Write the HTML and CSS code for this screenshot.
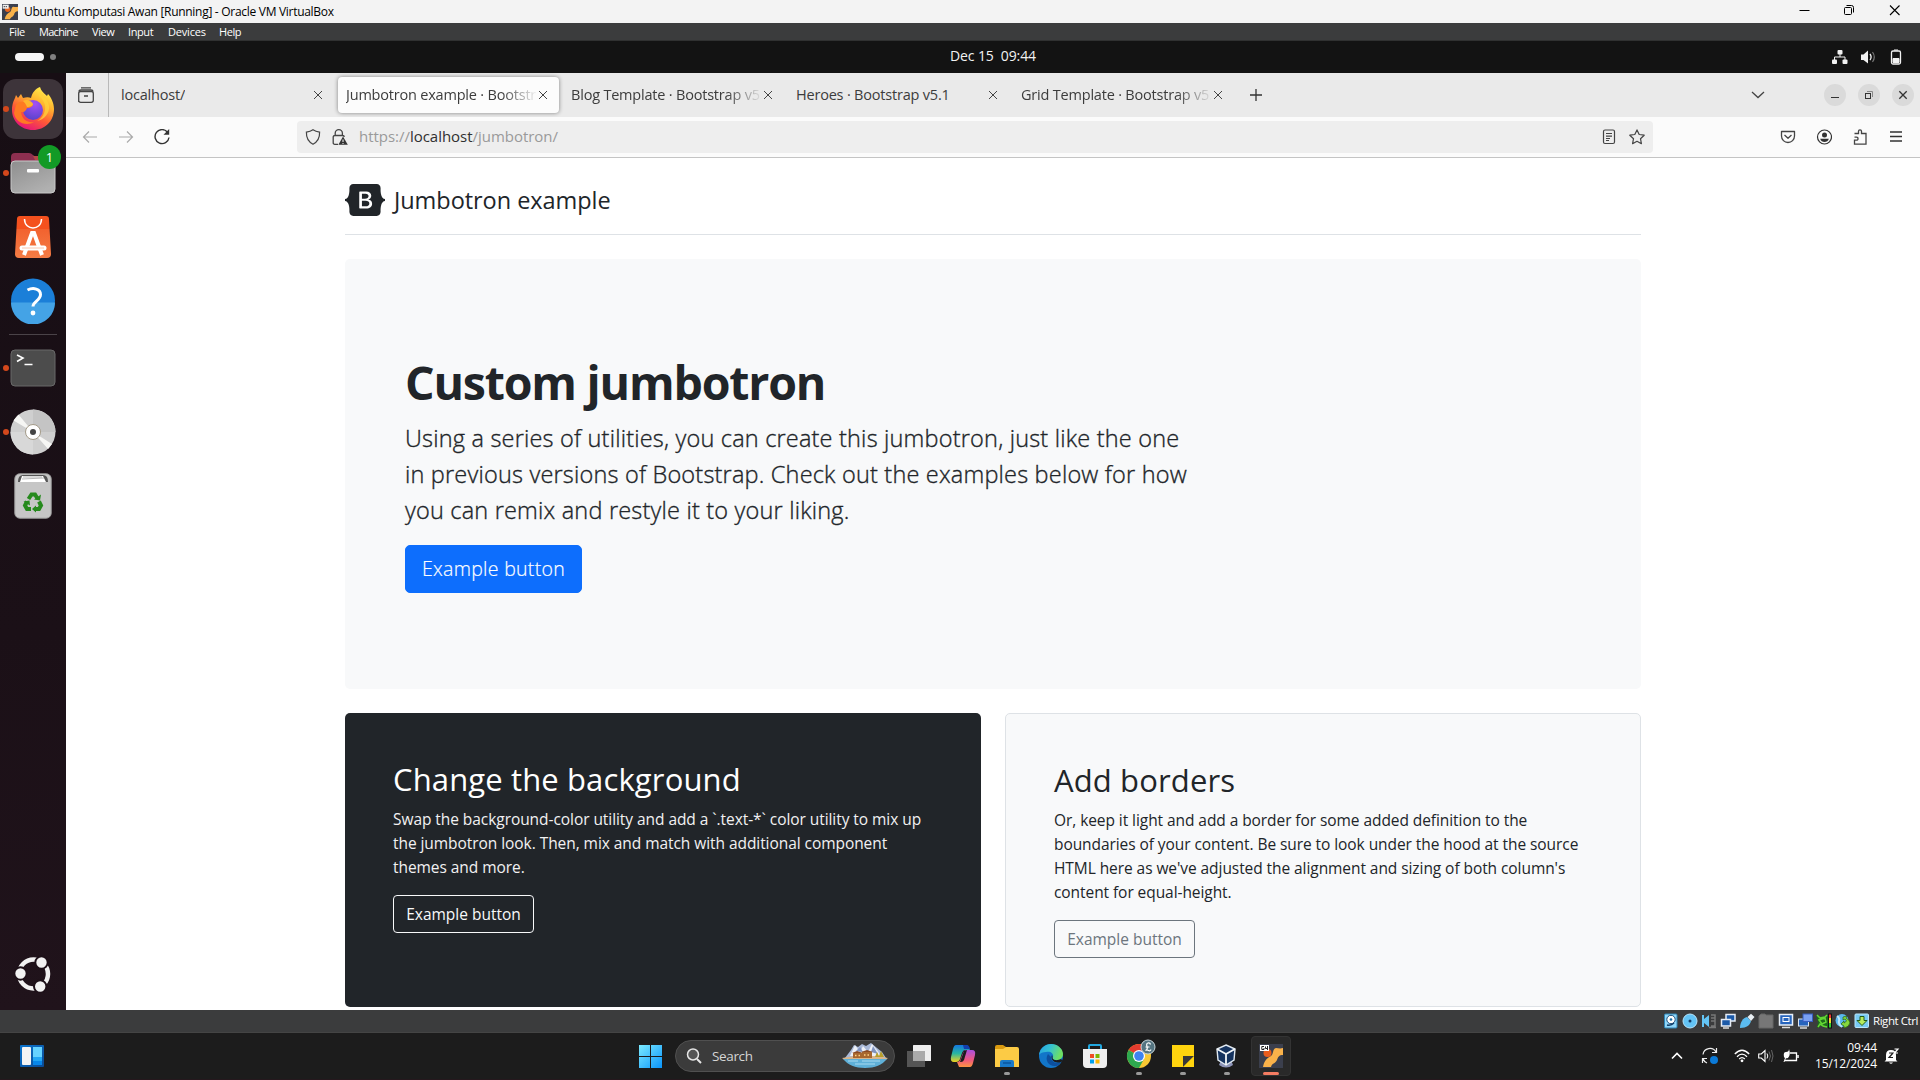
FILE: index.html
```
<!DOCTYPE html>
<html lang="en">
<head>
<meta charset="utf-8">
<title>Ubuntu Komputasi Awan [Running] - Oracle VM VirtualBox</title>
<link rel="stylesheet" href="styles.css">
</head>
<body>
<div class="screen">

  <header class="titlebar">
    <svg class="app-icon" width="16" height="16" viewBox="0 0 24 24"><rect width="24" height="24" fill="#3b3f4d"/><path d="M4 23c1-6 4-9 8-11 3-2 1-7 5-8 2 0 4 1 7 0v7c-4 0-5 2-6 5-2 4-5 3-6 7z" fill="#f9b24a"/><circle cx="8.500" cy="8" r="4" fill="#e8641f"/><rect x="1" y="1" width="9" height="6" fill="#eee"/><path d="M2.500 4h6" stroke="#444" stroke-width="1.500" stroke-dasharray="2 1"/></svg>
    <span class="titlebar-text">Ubuntu Komputasi Awan [Running] - Oracle VM VirtualBox</span>
    <div class="titlebar-controls">
      <svg width="45" height="23" viewBox="0 0 45 23"><path d="M17.500 10.500h10" stroke="#000"/></svg>
      <svg width="45" height="23" viewBox="0 0 45 23"><g fill="none" stroke="#000"><rect x="17.500" y="7.500" width="7" height="7" rx="1"/><path d="M19.500 5.500h5q2 0 2 2v5"/></g></svg>
      <svg width="45" height="23" viewBox="0 0 45 23"><path d="M18 5.500l9.500 9.500M27.500 5.500L18 15" stroke="#000" stroke-width="1.100"/></svg>
    </div>
  </header>

  <nav class="menubar">
    <span class="menu-file">File</span><span class="menu-machine">Machine</span><span class="menu-view">View</span><span class="menu-input">Input</span><span class="menu-devices">Devices</span><span>Help</span>
  </nav>

  <div class="topbar">
    <div class="workspaces"><i class="workspace-active"></i><i class="workspace-dot"></i></div>
    <div class="topbar-clock">Dec 15&nbsp; 09:44</div>
    <div class="topbar-status">
      <svg width="16" height="16" viewBox="0 0 16 16"><g fill="#f2f2f2"><rect x="5.500" y="1" width="5" height="4.500" rx="1"/><rect x="0" y="10.500" width="5" height="4.500" rx="1"/><rect x="10.500" y="10.500" width="5" height="4.500" rx="1"/></g><path d="M8 5v3M2.500 11V8h10.500v3" fill="none" stroke="#f2f2f2"/></svg>
      <svg width="16" height="16" viewBox="0 0 16 16"><path d="M1 5.500h2.500L8 1.500v13L3.500 11H1z" fill="#f2f2f2"/><path d="M10 5q2.200 3 0 6" fill="none" stroke="#f2f2f2" stroke-width="1.300"/><path d="M12.500 3q3.600 5 0 10" fill="none" stroke="#777" stroke-width="1.200"/></svg>
      <svg width="16" height="16" viewBox="0 0 16 16"><rect x="3.500" y="2" width="9" height="13" rx="1.500" fill="none" stroke="#f2f2f2" stroke-width="1.300"/><path d="M6 1h4M5 9.500h6v4H5z" fill="#f2f2f2" stroke="#f2f2f2"/></svg>
    </div>
  </div>

  <div class="desktop">
    <aside class="dock">
      <div class="dock-item running"><div class="dock-focus">
        <svg width="44" height="44" viewBox="0 0 44 44">
          <defs><linearGradient id="fx" x1=".8" y1="0" x2=".3" y2="1"><stop offset="0" stop-color="#fff44f"/><stop offset=".35" stop-color="#ffb32e"/><stop offset=".65" stop-color="#ff5a36"/><stop offset="1" stop-color="#e5127b"/></linearGradient><radialGradient id="fp" cx=".6" cy=".2" r=".9"><stop offset="0" stop-color="#a450f5"/><stop offset="1" stop-color="#5141c8"/></radialGradient></defs>
          <path d="M29 0c1 4 4 6 7 9l1-2c3 3 6 9 6 15 0 12-9 21-21 21S1 34 1 23c0-6 2-10 3-12l1-3 2 3 3-4 2 4c3-1 6-1 8 0 1-5 4-9 9-11z" fill="url(#fx)"/>
          <circle cx="22" cy="23" r="10" fill="url(#fp)"/>
          <path d="M5 18c2-3 5-4 9-3l8 2c0 2-2 4-6 4-2 5-5 4-6 4 1 8 7 11 13 10-8 5-19 0-20-9z" fill="#ff7a22"/>
          <path d="M12 14c4-3 10 1 10 3s-3 3-6 3c-1-3-3-5-4-6z" fill="#ffb52e"/>
          <path d="M28 9c4 3 7 8 6 14-1 5-4 9-8 11 7-1 13-8 12-15-1-6-5-9-10-14z" fill="#ffd33b" opacity=".75"/>
        </svg></div></div>
      <div class="dock-item running"><svg width="46" height="42" viewBox="0 0 46 42"><defs><linearGradient id="fl" x1="0" y1="0" x2=".6" y2="1"><stop offset="0" stop-color="#8e8e8e"/><stop offset="1" stop-color="#b0b0b0"/></linearGradient></defs><path d="M1 5q0-4 4-4h14q2 0 4 2t4 2h14q4 0 4 4v10H1z" fill="#8d2f50"/><path d="M23 4h18q4 0 4 4H25z" fill="#b24a45"/><rect x="1" y="9" width="44" height="32" rx="4" fill="url(#fl)" stroke="#c9c9c9"/><rect x="17" y="17" width="12" height="3.500" rx="1" fill="#fff"/></svg><b class="dock-badge">1</b></div>
      <div class="dock-item"><svg width="38" height="42" viewBox="0 0 38 42"><defs><linearGradient id="ap" x1="0" y1="0" x2="0" y2="1"><stop offset="0" stop-color="#f4511e"/><stop offset=".3" stop-color="#f4511e"/><stop offset=".31" stop-color="#f2622f"/><stop offset="1" stop-color="#f47c45"/></linearGradient></defs><path d="M6 0h26q3 0 3 3l2 35q0 4-4 4H5q-4 0-4-4L3 3q0-3 3-3z" fill="url(#ap)"/><path d="M10.500 3c0 12 17 12 17 0" fill="none" stroke="#fff" stroke-width="1.500"/><path d="M10 39l8-22h2l8 22" fill="none" stroke="#fff" stroke-width="4"/><path d="M8 32h22" stroke="#fff" stroke-width="5" stroke-linecap="round"/><path d="M8 32h22" stroke="#f9c6b0" stroke-width="1"/></svg></div>
      <div class="dock-item"><svg width="46" height="46" viewBox="0 0 46 46"><circle cx="23" cy="22.500" r="22" fill="#1b7fd8"/><path d="M1 24.500h44a22 22 0 0 1-44 0z" fill="#44a3e6"/><path d="M17.500 12c6-3 13-1 13 4.500 0 6-7.500 7-7.500 12" fill="none" stroke="#fff" stroke-width="3"/><circle cx="23" cy="35" r="2.400" fill="#fff"/></svg></div>
      <hr class="dock-divider">
      <div class="dock-item running"><svg width="46" height="38" viewBox="0 0 46 38"><rect x="1" y="1" width="44" height="36" rx="4" fill="#4c4c4c" stroke="#686868"/><path d="M7 6l6 3-6 3.500M14.500 15.500h8" fill="none" stroke="#fff" stroke-width="1.600"/></svg></div>
      <div class="dock-item running"><svg width="46" height="46" viewBox="0 0 46 46"><circle cx="23" cy="23" r="22.500" fill="#cfcfcf"/><path d="M23 23V.5A22.500 22.500 0 0 1 45.500 23z" fill="#c4c4c4"/><path d="M23 23v22.500A22.500 22.500 0 0 1 .5 23z" fill="#d8d8d8"/><path d="M23 23L3.500 11.500l5-6zM23 23l19 12-4 5z" fill="#f6f6f4"/><circle cx="23" cy="23" r="7.500" fill="#fff" stroke="#a39a88"/><circle cx="23" cy="23" r="3" fill="#444"/></svg></div>
      <div class="dock-item"><svg width="38" height="46" viewBox="0 0 38 46"><rect x=".8" y=".8" width="36.400" height="44.400" rx="5" fill="#c6c6c6" stroke="#9d9d9d"/><path d="M4 9q0-7 5-7h20q5 0 5 7z" fill="#555"/><path d="M6 9l2-6h21l3 6z" fill="#fff"/><path d="M8 6l22-1M9 4h19" stroke="#999" stroke-width=".7"/><g fill="none" stroke="#268a1d" stroke-width="4"><path d="M14.500 26l3-4.500h3.500l2.500 4"/><path d="M25 28.500l2 4-2 3.500h-4.500"/><path d="M17 36h-4l-2-3.500 2-4"/></g><path d="M20 26.500l6 1 1-6zM22 32.500v7L18 36zM9.500 28.500l6-1 .5 5z" fill="#268a1d"/></svg></div>
      <div class="dock-apps"><svg width="38" height="38" viewBox="0 0 38 38"><circle cx="19.500" cy="19" r="14.500" fill="none" stroke="#f2f2f2" stroke-width="4.500"/><g fill="#f2f2f2" stroke="#1d1018" stroke-width="2"><circle cx="6.500" cy="18.500" r="6.200"/><circle cx="27.500" cy="7.500" r="6.200"/><circle cx="26.200" cy="31.500" r="6.200"/></g></svg></div>
    </aside>

    <section class="browser">
      <div class="tabstrip">
        <div class="tab-history"><svg width="16" height="16" viewBox="0 0 16 16"><g fill="none" stroke="#444" stroke-width="1.300"><path d="M3 .8h10M.7 15V6.500q0-2 2-2h10.600q2 0 2 2v7q0 1.800-2 1.800H2.700q-2 0-2-1.800"/><path d="M1 4.500Q1 3 3 3h10q2 0 2 1.500M6 9h4"/></g></svg></div>
        <div class="tab"><span class="tab-title">localhost/</span><svg class="tab-close" width="10" height="10" viewBox="0 0 10 10"><path d="M1 1l8 8M9 1L1 9" stroke="#444"/></svg></div>
        <div class="tab selected"><span class="tab-title faded">Jumbotron example · Bootstrap v5.1</span><svg class="tab-close" width="10" height="10" viewBox="0 0 10 10"><path d="M1 1l8 8M9 1L1 9" stroke="#444"/></svg></div>
        <div class="tab"><span class="tab-title faded">Blog Template · Bootstrap v5.1</span><svg class="tab-close" width="10" height="10" viewBox="0 0 10 10"><path d="M1 1l8 8M9 1L1 9" stroke="#444"/></svg></div>
        <div class="tab"><span class="tab-title">Heroes · Bootstrap v5.1</span><svg class="tab-close" width="10" height="10" viewBox="0 0 10 10"><path d="M1 1l8 8M9 1L1 9" stroke="#444"/></svg></div>
        <div class="tab"><span class="tab-title faded">Grid Template · Bootstrap v5.1</span><svg class="tab-close" width="10" height="10" viewBox="0 0 10 10"><path d="M1 1l8 8M9 1L1 9" stroke="#444"/></svg></div>
        <svg class="tab-new" width="12" height="12" viewBox="0 0 12 12"><path d="M6 0v12M0 6h12" stroke="#333" stroke-width="1.300"/></svg>
        <div class="window-buttons">
          <svg class="tab-list" width="14" height="8" viewBox="0 0 14 8"><path d="M1 1l6 5.500L13 1" fill="none" stroke="#444" stroke-width="1.300"/></svg>
          <span class="window-button"><svg width="10" height="10" viewBox="0 0 10 10"><path d="M1 7.500h8" stroke="#333"/></svg></span>
          <span class="window-button"><svg width="10" height="10" viewBox="0 0 10 10"><g fill="none" stroke="#333"><rect x="1.500" y="3.500" width="5" height="5"/><path d="M3 1.500h5.500V7" stroke="#888"/></g></svg></span>
          <span class="window-button"><svg width="10" height="10" viewBox="0 0 10 10"><path d="M1.300 1.300l7.400 7.400M8.700 1.300L1.300 8.700" stroke="#333" stroke-width="1.300"/></svg></span>
        </div>
      </div>

      <div class="navbar">
        <div class="nav-buttons">
          <svg width="16" height="16" viewBox="0 0 16 16"><path d="M15 8H1.500M7 2.500L1.500 8 7 13.500" fill="none" stroke="#aaa" stroke-width="1.200"/></svg>
          <svg width="16" height="16" viewBox="0 0 16 16"><path d="M1 8h13.500M9 2.500L14.500 8 9 13.500" fill="none" stroke="#aaa" stroke-width="1.200"/></svg>
          <svg width="16" height="16" viewBox="0 0 16 16"><path d="M13.500 3.200A7 7 0 1 0 15 8.500" fill="none" stroke="#333" stroke-width="1.400"/><path d="M15.200 0v5.800H9.500z" fill="#333"/></svg>
        </div>
        <div class="urlbar">
          <svg width="16" height="16" viewBox="0 0 16 16"><path d="M8 .8c2 1.400 4 2 6.600 2.300.2 5.500-1.300 9.500-6.600 12.100C2.700 12.600 1.200 8.600 1.400 3.100 4 2.800 6 2.200 8 .8z" fill="none" stroke="#444" stroke-width="1.200"/></svg>
          <svg width="16" height="16" viewBox="0 0 16 16"><path d="M3.200 6.500V4.300a3.600 3.600 0 0 1 7.200 0v2.200M6 15.300H2.800q-1.600 0-1.600-1.600V8q0-1.500 1.600-1.500h8q1.400 0 1.400 1.500" fill="none" stroke="#444" stroke-width="1.300"/><path d="M11 7.500l4.800 8.300H6.400z" fill="#333"/><path d="M11 10.500v2.500M11 14v1" stroke="#fff"/></svg>
          <span class="url">https://<span class="url-host">localhost</span>/jumbotron/</span>
          <svg class="reader" width="16" height="16" viewBox="0 0 16 16"><g fill="none" stroke="#444" stroke-width="1.200"><rect x="2.500" y="1" width="11" height="13.500" rx="1.500"/><path d="M5 4.500h6M5 7.200h6M5 9.500h4M5 11.500h3"/></g></svg>
          <svg width="16" height="16" viewBox="0 0 16 16"><path d="M8 .9l2.200 4.600 5 .7-3.700 3.500.9 5L8 12.300l-4.400 2.400.9-5L.8 6.200l5-.7z" fill="none" stroke="#444" stroke-width="1.200" stroke-linejoin="round"/></svg>
        </div>
        <div class="nav-actions">
          <svg width="16" height="16" viewBox="0 0 16 16"><path d="M1.500 2.500h13v4.500a6.500 6.500 0 0 1-13 0zM4.500 6L8 9.200 11.500 6" fill="none" stroke="#444" stroke-width="1.300" stroke-linejoin="round"/></svg>
          <svg width="16" height="16" viewBox="0 0 16 16"><circle cx="8.500" cy="8" r="7" fill="none" stroke="#333" stroke-width="1.200"/><circle cx="8.500" cy="6" r="2.500" fill="#333"/><path d="M4.200 9.800h8.600c-.5 2.200-2.300 3.200-4.300 3.200s-3.800-1-4.300-3.200z" fill="#333"/></svg>
          <svg width="16" height="16" viewBox="0 0 16 16"><path d="M2.500 4.500h4V2.200q0-1.400 1.500-1.400t1.500 1.400v2.300H14v10.700H2.500v-4h2q1.500 0 1.500-1.500T4.500 8.200h-2" fill="none" stroke="#444" stroke-width="1.300"/></svg>
          <svg width="16" height="16" viewBox="0 0 16 16"><path d="M2 3h12M2 7.500h12M2 12h12" stroke="#333" stroke-width="1.300"/></svg>
        </div>
      </div>

      <main class="page">
        <div class="container">
          <header class="brand">
            <svg width="40" height="32" viewBox="0 0 118 94"><path fill="#212529" fill-rule="evenodd" d="M24.509 0c-6.733 0-11.715 5.893-11.492 12.284.214 6.140-.064 14.092-2.066 20.577C8.943 39.365 5.547 43.485 0 44.014v5.972c5.547.529 8.943 4.649 10.951 11.153 2.002 6.485 2.280 14.437 2.066 20.577C12.794 88.106 17.776 94 24.510 94H93.500c6.733 0 11.714-5.893 11.491-12.284-.214-6.140.064-14.092 2.066-20.577 2.009-6.504 5.396-10.624 10.943-11.153v-5.972c-5.547-.529-8.934-4.649-10.943-11.153-2.002-6.484-2.280-14.437-2.066-20.577C105.214 5.894 100.233 0 93.500 0H24.508zM80 57.863C80 66.663 73.436 72 62.543 72H44a2 2 0 0 1-2-2V24a2 2 0 0 1 2-2h18.437c9.083 0 15.044 4.920 15.044 12.474 0 5.302-4.010 10.049-9.119 10.880v.277C75.317 46.394 80 51.210 80 57.863zM60.521 28.340H49.948v14.934h8.905c6.884 0 10.680-2.772 10.680-7.727 0-4.643-3.264-7.207-9.012-7.207zM49.948 49.200v16.458H60.910c7.167 0 10.964-2.876 10.964-8.281 0-5.406-3.903-8.178-11.425-8.178H49.948z"/></svg>
            <span class="brand-text">Jumbotron example</span>
          </header>

          <section class="jumbotron">
            <h1>Custom jumbotron</h1>
            <p>Using a series of utilities, you can create this jumbotron, just like the one<br>in previous versions of Bootstrap. Check out the examples below for how<br>you can remix and restyle it to your liking.</p>
            <button class="btn btn-primary">Example button</button>
          </section>

          <div class="cards">
            <section class="card card-dark">
              <h2>Change the background</h2>
              <p>Swap the background-color utility and add a `.text-*` color utility to mix up<br>the jumbotron look. Then, mix and match with additional component<br>themes and more.</p>
              <button class="btn btn-outline-light">Example button</button>
            </section>
            <section class="card card-light">
              <h2>Add borders</h2>
              <p>Or, keep it light and add a border for some added definition to the<br>boundaries of your content. Be sure to look under the hood at the source<br>HTML here as we've adjusted the alignment and sizing of both column's<br>content for equal-height.</p>
              <button class="btn btn-outline-secondary">Example button</button>
            </section>
          </div>
        </div>
      </main>
    </section>
  </div>

  <div class="vm-status">
    <svg width="16" height="16" viewBox="0 0 16 16"><rect x="1.500" y="1" width="12.500" height="14" rx="1" fill="#8fd6f8" stroke="#2e83b5"/><circle cx="8" cy="6.500" r="4.200" fill="#fff" stroke="#1a4c7a"/><circle cx="8" cy="6.500" r="1.300" fill="#1a6fa8"/><path d="M4 12q4 1 7-2" stroke="#123c66" stroke-width="1.500" fill="none"/></svg>
    <svg width="16" height="16" viewBox="0 0 16 16"><circle cx="8" cy="8" r="7" fill="#63c4f6" stroke="#b5e5fd"/><circle cx="8" cy="8" r="1.500" fill="#123c66"/></svg>
    <svg width="16" height="16" viewBox="0 0 16 16"><path d="M1 2h2v4l5-4v12l-5-4v4H1z" fill="#64c5f5"/><path d="M10 2h4v11h-4M10 5h4M10 8h4M8 14.500h7" stroke="#777" stroke-width="1.500" fill="none"/></svg>
    <svg width="16" height="16" viewBox="0 0 16 16"><g fill="#1b5aa8" stroke="#e5ecf5" stroke-width="1.500"><rect x="6" y="1.500" width="9" height="6.500"/><rect x="1.500" y="6.500" width="9" height="6.500"/></g><path d="M3 15h6" stroke="#ddd" stroke-width="1.500"/></svg>
    <svg width="16" height="16" viewBox="0 0 16 16"><path d="M1 15C1 9 4 5 8 4l4 4c-1 4-4 7-11 7z" fill="#5bbcf0"/><path d="M8.500 4L12 .8 15.500 4 12 8z" fill="#e8eef2"/></svg>
    <svg width="16" height="16" viewBox="0 0 16 16"><path d="M1 3l2-2h4l1 1h7v13H1z" fill="#777" stroke="#666"/></svg>
    <svg width="16" height="16" viewBox="0 0 16 16"><rect x="1.500" y="1.500" width="13" height="10.500" fill="#2765bd" stroke="#e8f0fa" stroke-width="1.500"/><rect x="5" y="4.500" width="6" height="4" fill="none" stroke="#fff"/><path d="M4 14.500h8" stroke="#ddd" stroke-width="1.500"/></svg>
    <svg width="16" height="16" viewBox="0 0 16 16"><rect x="1.500" y="6" width="10" height="7" fill="#2765bd" stroke="#dbe6f4"/><rect x="6" y="1" width="9.500" height="7.500" fill="#7aa0f2" stroke="#375dc0"/><path d="M3 15h7" stroke="#ddd" stroke-width="1.500"/></svg>
    <svg width="16" height="16" viewBox="0 0 16 16"><path d="M0 2l4 1.500h5L12 1v14l-3-2H5l-4 2 1-6z" fill="#1d6a1a"/><path d="M1 2l3 3 5-1 2-2M2 14l2-3 3 2 4 1M3 7l3 4 4-2-1-4z" fill="none" stroke="#63d634" stroke-width="1.500"/><path d="M12 .5h4v15h-4z" fill="#111"/><path d="M14 1.500v4" stroke="#e33" stroke-width="2"/><path d="M14 5v5" stroke="#ed3" stroke-width="2"/><path d="M14 10v4.500" stroke="#3c3" stroke-width="2"/></svg>
    <svg width="16" height="16" viewBox="0 0 16 16"><circle cx="7" cy="7.500" r="6.500" fill="#5ab8ee"/><path d="M2 3q3 2 2 5t3 6" stroke="#bce6fa" stroke-width="2" fill="none"/><path d="M8 4l4-1-1 2q4 2 4 5-1 4-6 5v-2l-3-2 3-3v2q4-2 1-4L8 7z" fill="#86d83e" stroke="#22610f" stroke-width=".7"/></svg>
    <svg width="16" height="16" viewBox="0 0 16 16"><rect x="1" y="1" width="13.500" height="13.500" rx="1" fill="#78caf4" stroke="#b9e7fc"/><path d="M6 3.500h4v4h3L8 12.500 3 7.500h3z" fill="#b7ec5d" stroke="#225d18"/></svg>
    <span class="host-key">Right Ctrl</span>
  </div>

  <footer class="taskbar">
    <div class="taskbar-left"><svg width="24" height="22" viewBox="0 0 24 22"><defs><linearGradient id="wg" x1="0" y1="0" x2="1" y2="1"><stop offset="0" stop-color="#0b75cf"/><stop offset="1" stop-color="#0b4a94"/></linearGradient></defs><rect width="24" height="22" rx="1" fill="url(#wg)"/><rect x="2" y="2" width="9" height="18" rx="1" fill="#f4f4f4"/><path d="M13 2h9v10h-9z" fill="#66d3ff"/><path d="M13 12h9v4h-9z" fill="#22a7f5"/><path d="M13 16h9v4h-9z" fill="#0786ea"/></svg></div>
    <div class="taskbar-center">
      <div class="start"><svg width="23" height="23" viewBox="0 0 23 23"><defs><linearGradient id="win" x1="0" y1="0" x2="1" y2="1"><stop offset="0" stop-color="#7cebff"/><stop offset="1" stop-color="#0a94fa"/></linearGradient></defs><path d="M0 0h11v11H0zM12 0h11v11H12zM0 12h11v11H0zM12 12h11v11H12z" fill="url(#win)"/></svg></div>
      <div class="search">
        <svg width="16" height="16" viewBox="0 0 16 16"><circle cx="7" cy="6.500" r="5.500" fill="#555" stroke="#e6e6e6" stroke-width="1.500"/><path d="M11 11l4 4" stroke="#e6e6e6" stroke-width="2"/></svg>
        <span class="search-text">Search</span>
        <svg width="46" height="26" viewBox="0 0 46 26"><path d="M3 15L9 7l3-5 4 2 4-3 4 2 5-3 6 5 5 4 4 6z" fill="#a9b9d8"/><path d="M8 13l5-11 5 7 3-6 5 6 4-8 5 6 4 6z" fill="#edf0f7"/><path d="M14 8l4-4 3 5zM29 9l2-6 5 8z" fill="#8094c0"/><path d="M0 15q23-5 46 0l-4 3H4z" fill="#d9b68c"/><path d="M11 10h9v5h-9zM20 9h10v6H20z" fill="#a8672f"/><path d="M10 10l5-2 6 2zM19 9l6-2 6 2z" fill="#8a4a25"/><path d="M13 12.500h1.500m2 0H18m4-.5h1.500m2 0H27" stroke="#ffd486" stroke-width="1.500"/><path d="M33 14l2-5 2 4 2-5 3 6z" fill="#b89f2c"/><path d="M1 16h44c-5 6-12 9-22 9S6 22 1 16z" fill="#5fb0d8"/><path d="M6 18h10m4 0h18M13 21h20" stroke="#a9daf0"/></svg>
      </div>
      <div class="task taskview"><svg width="24" height="22" viewBox="0 0 24 22"><rect x="6" width="18" height="16" rx=".5" fill="#eee"/><rect y="6" width="18" height="16" fill="#555"/><rect x="6" y="6" width="12" height="10" fill="#aaa"/></svg></div>
      <div class="task"><svg width="26" height="22" viewBox="0 0 26 22"><defs><linearGradient id="cp1" x1="0" y1="0" x2="0" y2="1"><stop offset="0" stop-color="#1476e0"/><stop offset=".5" stop-color="#29b6a0"/><stop offset="1" stop-color="#f0d31e"/></linearGradient><linearGradient id="cp2" x1="0" y1="0" x2="0" y2="1"><stop offset="0" stop-color="#a94fe0"/><stop offset=".6" stop-color="#f0597c"/><stop offset="1" stop-color="#fb9440"/></linearGradient></defs><path d="M6 0h11l3 5h-5q-2 0-3 3l-2 6q-1 3-4 3H4q-4 0-3-5L3 4q1-4 3-4z" fill="url(#cp1)"/><path d="M13 0h4q2 0 3 4h-6z" fill="#123fae"/><path d="M20 22H9l-2-5q3 0 4-4l2-5q1-3 4-3h5q4 0 3 5l-2 8q-1 4-3 4z" fill="url(#cp2)"/><path d="M14 6l3-1-3 10q-1 2-3 2h-1z" fill="#1c1c1c"/></svg></div>
      <div class="task open"><svg width="24" height="22" viewBox="0 0 24 22"><path d="M0 2q0-2 2-2h6l3 2h11v8H0z" fill="#d99a10"/><path d="M0 4h8l3-2h11q2 0 2 2v18H0z" fill="#fccb45"/><path d="M5 22v-5q0-2 2-2h10q2 0 2 2v5z" fill="#1979c9"/><path d="M8 18h8" stroke="#0a569e" stroke-width="1.500"/></svg></div>
      <div class="task"><svg width="24" height="24" viewBox="0 0 24 24"><defs><linearGradient id="eg" x1="0" y1="0" x2="1" y2=".3"><stop offset="0" stop-color="#249fe5"/><stop offset=".5" stop-color="#35c1d0"/><stop offset="1" stop-color="#6fdf62"/></linearGradient></defs><circle cx="12" cy="12" r="12" fill="#1276c9"/><path d="M0 11C1 4 6 0 12 0c7 0 12 5 12 10 0 4-3 6-6 6-4 0-5-1-4-3 1-4-3-6-7-5-3 0-6 1-7 3z" fill="url(#eg)"/><path d="M9 10c-4 6 1 13 8 12 2 0 4-2 5-4-5 2-10 0-10-5z" fill="#0d4f9e"/><path d="M13 11c1 2 0 3 1 4 2 2 6 1 8 0l2 2-2 1c-6 2-11-2-9-7z" fill="#1c1c1c"/></svg></div>
      <div class="task"><svg width="24" height="24" viewBox="0 0 24 24"><path d="M6 6V2q0-1 1-1h10q1 0 1 1v4" fill="none" stroke="#22a8e0" stroke-width="2"/><path d="M0 5h24v15q0 4-4 4H4q-4 0-4-4z" fill="#efefef"/><path d="M7 10h4v4H7z" fill="#f04d23"/><path d="M12.500 10h4v4h-4z" fill="#7db700"/><path d="M7 15.500h4v4H7z" fill="#00a0ec"/><path d="M12.500 15.500h4v4h-4z" fill="#fdb600"/></svg></div>
      <div class="task open"><svg class="chrome" width="30" height="30" viewBox="0 0 30 30"><circle cx="13" cy="17" r="12" fill="#f9c934"/><path d="M13 17L2.600 11A12 12 0 0 1 23.400 11z" fill="#e33b2e"/><path d="M13 17L2.600 11A12 12 0 0 0 13 29l5-9z" fill="#2da94f"/><circle cx="13" cy="17" r="6" fill="#fff"/><circle cx="13" cy="17" r="4.800" fill="#3f83f1"/><circle cx="22" cy="8" r="7" fill="#557582" stroke="#c9d6da"/><path d="M24.500 5.500q-.5-2-2.500-1.500t-1 3.500q1 3-1.500 4 1.500-1 3 0t2.500-1M19.500 8h4" fill="none" stroke="#fff" stroke-width="1.200"/></svg></div>
      <div class="task open"><svg width="22" height="22" viewBox="0 0 22 22"><path d="M0 0h22v11L11 22H0z" fill="#ffd40e"/><path d="M11 11h11L11 22z" fill="#383838"/><path d="M22 11v11H11z" fill="#ffd40e"/></svg></div>
      <div class="task open"><svg class="vbox" width="22" height="24" viewBox="0 0 22 24"><path d="M6 16h10l2 5q-7 5-14 0z" fill="#8d94b8"/><path d="M11 1l9 4-1 11-8 5-8-5L2 5z" fill="#15335f" stroke="#dfe8f0" stroke-width="1.400"/><path d="M2 5l9 5 9-5M11 10v11" fill="none" stroke="#f1f5f8" stroke-width="1.800"/></svg></div>
      <div class="task active"><svg width="24" height="24" viewBox="0 0 24 24"><rect width="24" height="24" fill="#3b3f4d"/><path d="M4 23c1-6 4-9 8-11 3-2 1-7 5-8 2 0 4 1 7 0v7c-4 0-5 2-6 5-2 4-5 3-6 7z" fill="#fab24a"/><circle cx="8.500" cy="9" r="4" fill="#ea5d1d"/><rect x="1" y="1" width="9" height="6" fill="#fff"/><path d="M5 2.500H2.800v3H5v-1.500M6.500 2.500v2h2.500M8.500 2v4" stroke="#222" fill="none"/></svg></div>
    </div>
    <div class="tray">
      <svg width="12" height="8" viewBox="0 0 12 8"><path d="M1 6.500l5-5 5 5" fill="none" stroke="#fff" stroke-width="1.600"/></svg>
      <svg class="tray-sync" width="18" height="18" viewBox="0 0 18 18"><path d="M2 7.500a7 7 0 0 1 13-2.500M15.500 1v4.500H11M6 16a7 7 0 0 1-4-4.500M1.500 16v-4.500H6" fill="none" stroke="#eee" stroke-width="1.200"/><circle cx="13" cy="13" r="4" fill="#0b7ad8"/></svg>
      <svg class="tray-wifi" width="16" height="14" viewBox="0 0 16 14"><path d="M.8 5q7.200-7.500 14.400 0M3 7.700q5-5 10 0M5.200 10q2.800-2.700 5.600 0" fill="none" stroke="#fff" stroke-width="1.300"/><circle cx="8" cy="11.800" r="1.400" fill="#fff"/></svg>
      <svg class="tray-volume" width="16" height="14" viewBox="0 0 16 14"><path d="M.7 5h2.600L7 1.500v11L3.300 9H.7z" fill="none" stroke="#fff" stroke-width="1.100"/><path d="M9 4.500q1.600 2.500 0 5" fill="none" stroke="#fff"/><path d="M11 2.500q3 4.500 0 9M13.500 1q3 6 0 12" fill="none" stroke="#666"/></svg>
      <svg class="tray-battery" width="18" height="14" viewBox="0 0 18 14"><path d="M8 4h6.500v7.500H3" fill="none" stroke="#fff" stroke-width="1.300"/><path d="M16 6v3" stroke="#fff" stroke-width="1.500"/><path d="M7 0q2 6-1 9-3 1-4-1-1-5 2-5Q7 3 7 0z" fill="#fff"/><path d="M5 5l-3 8" stroke="#fff"/></svg>
      <div class="tray-clock"><span>09:44</span><span class="tray-date">15/12/2024</span></div>
      <svg class="tray-bell" width="16" height="17" viewBox="0 0 16 17"><path d="M2 12V7q0-5 5-5 5 0 5 5v5l1.500 1.500H.5zM5 14.500h4q-2 2.500-4 0z" fill="#fff"/><path d="M5 5h4L5 9.500h4" fill="none" stroke="#1c1c1c" stroke-width="1.200"/><path d="M10.500 1h3.500l-3.500 4H14" fill="none" stroke="#fff" stroke-width="1.200"/></svg>
    </div>
  </footer>
</div>
</body>
</html>
```
FILE: styles.css
```
* { box-sizing: border-box; }
body { margin: 0; font-family: "Open Sans", "Noto Sans", sans-serif; overflow: hidden; }
svg { display: block; flex: none; }
.screen { width: 1920px; height: 1080px; display: flex; flex-direction: column; white-space: nowrap; background: #1c1c1c; }

/* VirtualBox window chrome */
.titlebar { height: 23px; display: flex; align-items: center; padding-left: 2px; background: #f3f3f3; color: #000; }
.titlebar-text { margin-left: 6px; font-size: 12px; letter-spacing: -0.29px; }
.titlebar-controls { display: flex; margin-left: auto; padding-right: 3px; }
.menubar { height: 18px; display: flex; align-items: center; padding-left: 9px; background: #3b3c3d; border-bottom: 1px solid #303131; color: #fff; font-size: 11px; letter-spacing: -0.4px; }
.menu-file { width: 30px; }
.menu-machine { width: 53px; letter-spacing: -0.7px; }
.menu-view { width: 36px; }
.menu-input { width: 40px; }
.menu-devices { width: 51px; letter-spacing: -0.2px; }

/* GNOME top bar */
.topbar { height: 32px; display: grid; grid-template-columns: 1fr auto 1fr; align-items: center; background: #131313; color: #f2f2f2; }
.workspaces { display: flex; align-items: center; gap: 6px; padding-left: 15px; }
.workspace-active { width: 29px; height: 8px; border-radius: 4px; background: #f6f6f6; }
.workspace-dot { width: 6px; height: 6px; border-radius: 3px; background: #808080; }
.topbar-clock { padding: 0 0 3px 66px; font-size: 14px; letter-spacing: -0.1px; }
.topbar-status { display: flex; justify-content: flex-end; gap: 12px; padding-right: 16px; }

/* Dock */
.desktop { height: 937px; display: flex; }
.dock { width: 66px; display: flex; flex-direction: column; padding-top: 4px; background: linear-gradient(#170e14, #1b1017 60%, #20131b); }
.dock-item { position: relative; height: 64px; flex: none; display: flex; align-items: center; justify-content: center; }
.dock-item.running::before { content: ""; position: absolute; left: 3px; top: 29px; width: 6px; height: 6px; border-radius: 50%; background: #d4481c; }
.dock-focus { width: 60px; height: 60px; border-radius: 13px; display: flex; align-items: center; justify-content: center; background: #3d343a; }
.dock-focus svg { margin-top: -1px; }
.dock-badge { position: absolute; left: 38px; top: 4px; width: 23px; height: 24px; border-radius: 50%; background: #129a26; color: #fff; font-size: 13px; font-weight: 400; line-height: 24px; text-align: center; }
.dock-divider { width: 48px; height: 1px; margin: 1px auto; border: 0; background: #4a4348; }
.dock-apps { margin-top: auto; height: 55px; display: flex; justify-content: center; }

/* Browser */
.browser { flex: 1; display: flex; flex-direction: column; background: #fff; overflow: hidden; }
.tabstrip { height: 44px; flex: none; display: flex; align-items: center; background: #eaeaea; }
.tab-history { width: 43px; height: 44px; display: flex; align-items: center; padding-left: 12px; border-right: 1px solid #b9b9b9; }
.tab { width: 221px; height: 36px; margin-left: 4px; display: flex; align-items: center; justify-content: space-between; padding: 0 11px 0 8px; border-radius: 4px; }
.tab.selected { background: #fcfcfc; box-shadow: 0 0 4px rgba(0, 0, 0, .45); }
.tab-title { padding-bottom: 2px; color: #3c3c3c; font-size: 14.5px; letter-spacing: -0.2px; overflow: hidden; }
.tab-title.faded { flex: 0 0 190px; -webkit-mask-image: linear-gradient(90deg, #000 155px, transparent 192px); mask-image: linear-gradient(90deg, #000 155px, transparent 192px); }
.tab-new { margin-left: 16px; }
.window-buttons { margin-left: auto; display: flex; align-items: center; gap: 12px; padding-right: 6px; }
.tab-list { margin-right: 47px; }
.window-button { width: 22px; height: 22px; border-radius: 50%; display: flex; align-items: center; justify-content: center; background: #dadada; }
.navbar { height: 41px; flex: none; display: flex; align-items: center; background: #fbfbfb; border-bottom: 1px solid #c4c4c4; }
.nav-buttons { width: 231px; display: flex; gap: 20px; padding-left: 16px; }
.urlbar { width: 1356px; height: 32px; display: flex; align-items: center; gap: 11px; padding: 0 8px; border-radius: 4px; background: #eee; }
.url { padding-bottom: 3px; color: #9a9a9a; font-size: 15px; letter-spacing: -0.03px; }
.url-host { color: #303030; }
.reader { margin: 0 1px 0 auto; }
.nav-actions { margin-left: auto; display: flex; gap: 20px; padding-right: 16px; }

/* Web page */
.page { flex: 1; overflow: hidden; color: #212529; }
.container { width: 1296px; margin: 0 auto; padding-top: 24px; }
.brand { height: 53px; display: flex; align-items: center; gap: 9px; padding-bottom: 16px; margin-bottom: 24px; border-bottom: 1px solid #dee2e6; }
.brand-text { font-size: 23.5px; font-weight: 400; letter-spacing: -0.05px; line-height: 36px; }
.jumbotron { height: 429.6px; margin-bottom: 24px; padding: 95px 60px 0; border-radius: 5px; background: #f8f9fa; }
.jumbotron h1 { margin: 0 0 8px; font-size: 46.5px; font-weight: 700; line-height: 57.6px; letter-spacing: -1.2px; }
.jumbotron p { margin: 0 0 17px; font-size: 23.5px; font-weight: 300; line-height: 36px; letter-spacing: 0.19px; -webkit-text-stroke: 0.35px currentColor; }
.btn { display: block; font-family: inherit; border: 1px solid; border-radius: 4px; padding: 0; }
.btn-primary { width: 177px; height: 48px; border-color: #0d6efd; border-radius: 5px; background: #0d6efd; color: #fff; font-size: 19.5px; font-weight: 300; letter-spacing: 0.29px; -webkit-text-stroke: 0.2px currentColor; }
.cards { display: grid; grid-template-columns: 1fr 1fr; gap: 24px; }
.card { height: 294.4px; padding: 47px 48px; border-radius: 5px; }
.card h2 { margin: 0 0 9px; font-size: 31px; font-weight: 400; line-height: 38.4px; letter-spacing: 0.13px; }
.card p { margin: 0 0 16px; font-size: 15.5px; font-weight: 400; line-height: 24px; letter-spacing: -0.07px; }
.card-dark { background: #212529; color: #fff; }
.card-dark p { letter-spacing: -0.06px; color: #f1f1f2; }
.card-light { border: 1px solid #dee2e6; background: #f8f9fa; }
.card .btn { width: 141px; height: 38px; background: transparent; font-size: 15.5px; font-weight: 400; }
.btn-outline-light { color: #f8f9fa; }
.card .btn-outline-secondary { color: #6c757d; }

/* VirtualBox status bar */
.vm-status { height: 23px; display: flex; align-items: center; justify-content: flex-end; gap: 3.1px; padding: 0 2px 1px 0; background: #3b3c3d; border-bottom: 1px solid #444; color: #fff; }
.host-key { width: 45px; font-size: 11.5px; letter-spacing: -0.45px; }

/* Windows taskbar */
.taskbar { height: 47px; display: flex; align-items: center; background: #1c1c1c; border-bottom: 1px solid #25181d; }
.taskbar-left { width: 639px; padding-left: 20px; }
.taskbar-center { display: flex; align-items: center; }
.start { width: 36px; }
.search { width: 220px; height: 32px; display: flex; align-items: center; padding: 0 6px 0 10px; border: 1px solid #505050; border-radius: 16px; background: #3b3b3b; }
.search-text { flex: 1; margin-left: 10px; color: #d5d5d5; font-size: 13.5px; letter-spacing: -0.35px; }
.task { position: relative; width: 40px; height: 40px; margin-left: 4px; display: flex; align-items: center; justify-content: center; border-radius: 4px; }
.task.active { background: #292929; border: 1px solid #333; }
.task.open::after { content: ""; position: absolute; left: 17px; top: 36px; width: 6px; height: 3px; border-radius: 2px; background: #999; }
.task.active::after { content: ""; position: absolute; left: 11px; top: 35px; width: 16px; height: 3px; border-radius: 2px; background: #f47c62; }
.chrome { margin: -5px -3px 0 1px; }
.vbox { margin-right: 3px; }
.tray { margin-left: auto; display: flex; align-items: center; padding-right: 20px; color: #fff; }
.tray-sync { margin-left: 18px; }
.tray-wifi { margin-left: 15px; }
.tray-volume { margin-left: 8px; }
.tray-battery { margin-left: 8px; }
.tray-clock { width: 62px; margin-left: 15px; display: flex; flex-direction: column; align-items: flex-end; font-size: 12px; line-height: 16px; letter-spacing: -0.17px; }
.tray-bell { margin-left: 7px; }
```
